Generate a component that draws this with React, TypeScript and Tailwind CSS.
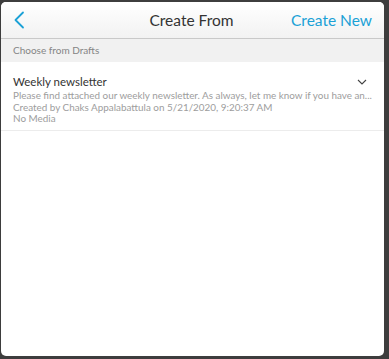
import React from "react";

const App = () => {
  const draft = {
    title: "Weekly newsletter",
    des: "Please find attached our weekly newsletter. As always, let me know if you have an...",
    created: "Created by Chaks Appalabattula on 5/21/2020, 9:20:37 AM",
    media: "No Media",
  };
  return (
    <div className="w-[389px] h-[359px] bg-[#3d3d3d] pt-[2px] pl-[1px] pr-[5px] pb-[3px] font-['Lato',sans-serif]">
      <div className="w-full h-full bg-white rounded-[5px] overflow-hidden flex flex-col">
        <div className="h-[37px] shrink-0 flex items-center px-[12px] bg-gradient-to-b from-white to-[#f2f2f2] border-b border-[#c9c9c9]">
          <div className="w-[100px] flex items-center">
            <svg width="12" height="18" viewBox="0 0 12 18" fill="none">
              <path d="M10 1.5 L2.5 9 L10 16.5" stroke="#1ba1d6" strokeWidth="1.8" strokeLinecap="round" strokeLinejoin="round" />
            </svg>
          </div>
          <h1 className="flex-1 text-center text-[15.5px] leading-[20px] text-[#333] pr-[2px]">Create From</h1>
          <div className="w-[100px] text-right text-[15.5px] leading-[20px] text-[#1ba1d6]">Create New</div>
        </div>
        <div className="h-[23px] shrink-0 flex items-center px-[12px] bg-[#f1f1f1] text-[10px] text-[#858585]">
          Choose from Drafts
        </div>
        <div className="px-[12px] pt-[11px] pb-[5px] border-b border-[#ececec]">
          <div className="flex justify-between items-center">
            <h2 className="text-[11.5px] text-[#333] leading-[17px]">{draft.title}</h2>
            <svg width="10" height="6" viewBox="0 0 10 6" fill="none" className="mr-[5px]">
              <path d="M1 1 L5 5 L9 1" stroke="#444" strokeWidth="1.1" />
            </svg>
          </div>
          <div className="text-[9.9px] leading-[11.6px] text-[#9d9d9d] whitespace-nowrap">
            <p>{draft.des}</p>
            <p>{draft.created}</p>
            <p>{draft.media}</p>
          </div>
        </div>
      </div>
    </div>
  );
};

export default App;
